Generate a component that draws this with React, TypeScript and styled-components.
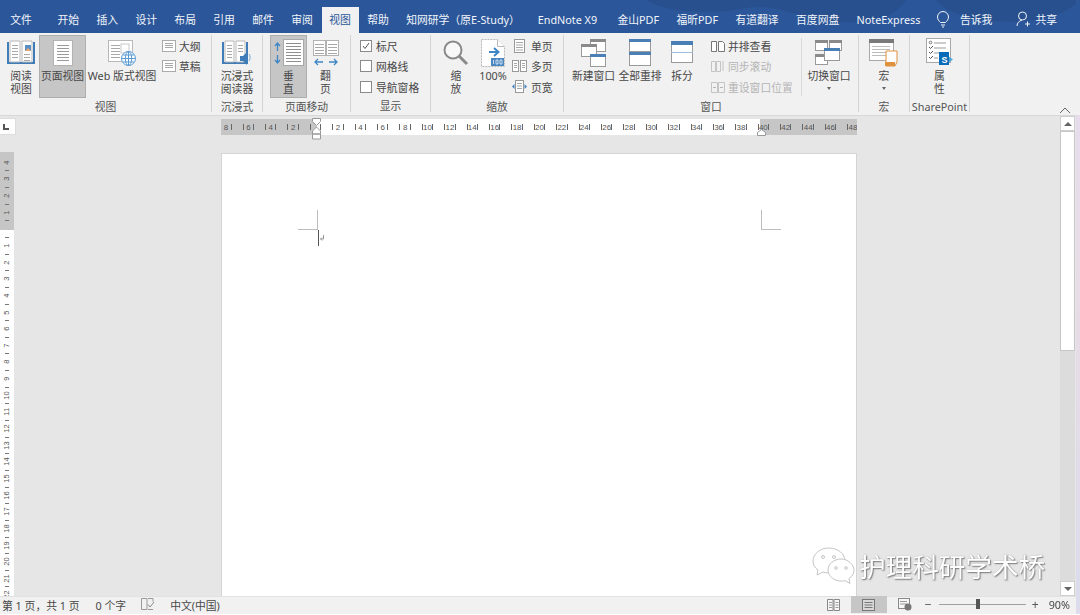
import React from "react";
import styled, { createGlobalStyle } from "styled-components";

const GlobalStyle = createGlobalStyle`
    html, body {
        margin: 0;
        padding: 0;
        background: #fff;
    }
    * {
        box-sizing: border-box;
    }
`;

const FONT = `"Noto Sans", "Noto Sans CJK SC", sans-serif`;

const Window = styled.div`
    position: relative;
    display: flex;
    width: 1080px;
    height: 615px;
    overflow: hidden;
    font-family: ${FONT};
    font-size: 10.8px;
    color: #484848;
    filter: blur(0.35px);
`;

const Main = styled.div`
    display: flex;
    flex-direction: column;
    width: 1076px;
    height: 614px;
`;

const DesktopStrip = styled.div`
    width: 4px;
    height: 614px;
    background: linear-gradient(#2b579a 33px, #f1f1f1 33px, #f1f1f1 115px, #e6dcec 115px, #e8dce6 300px, #dcdcec 600px);
`;

const TabBar = styled.div`
    position: relative;
    display: flex;
    flex: none;
    height: 33px;
    padding: 7px 0 0 1.5px;
    background: #2b579a;
`;

const TabPattern = styled.svg`
    position: absolute;
    top: 0;
    right: 0;
`;

const Tab = styled.div<{ $active?: boolean; $gap?: number }>`
    position: relative;
    display: flex;
    align-items: center;
    height: 26px;
    padding: 0 ${(p) => (p.$active ? "7.7px" : "8.7px")} 2px;
    margin-right: ${(p) => p.$gap ?? 0}px;
    white-space: nowrap;
    color: ${(p) => (p.$active ? "#2b579a" : "#f2f5fa")};
    background: ${(p) => (p.$active ? "#f1f1f1" : "transparent")};
`;

const TabTools = styled.div`
    position: relative;
    display: flex;
    flex: none;
    align-items: center;
    height: 26px;
    margin-left: auto;
    padding: 0 19px 2px 0;
    white-space: nowrap;
    color: #f2f5fa;
`;

const ToolText = styled.span<{ $gap: number }>`
    margin-left: ${(p) => p.$gap}px;
`;

const PersonSlot = styled.span`
    display: flex;
    flex: none;
    justify-content: flex-end;
    width: 38px;
`;

const Ribbon = styled.div`
    display: flex;
    flex: none;
    height: 82px;
    padding-top: 2px;
    background: #f1f1f1;
`;

const Group = styled.div<{ $width: number }>`
    display: flex;
    flex: none;
    flex-direction: column;
    width: ${(p) => p.$width}px;
    height: 77px;
    border-right: 1px solid #d2d2d2;
`;

const GroupBody = styled.div<{ $pad?: number }>`
    display: flex;
    height: 63px;
    padding-left: ${(p) => p.$pad ?? 0}px;
`;

const GroupLabel = styled.div`
    margin-top: 2px;
    height: 14px;
    line-height: 14px;
    text-align: center;
    white-space: nowrap;
    color: #555;
`;

const LargeButton = styled.div<{ $width: number; $active?: boolean; $left?: number }>`
    display: flex;
    flex: none;
    flex-direction: column;
    align-items: center;
    width: ${(p) => p.$width}px;
    height: 63px;
    margin-left: ${(p) => p.$left ?? 0}px;
    padding-top: 2px;
    line-height: 13px;
    text-align: center;
    white-space: nowrap;
    background: ${(p) => (p.$active ? "#c6c6c6" : "transparent")};
    outline: ${(p) => (p.$active ? "1px solid #aeaeae" : "none")};
    outline-offset: -1px;
`;

const IconSlot = styled.div`
    display: flex;
    flex: none;
    align-items: center;
    justify-content: center;
    height: 32px;
`;

const SmallColumn = styled.div<{ $width: number; $left?: number }>`
    display: flex;
    flex: none;
    flex-direction: column;
    width: ${(p) => p.$width}px;
    margin-left: ${(p) => p.$left ?? 0}px;
    padding-top: 0.5px;
`;

const SmallRow = styled.div<{ $gap?: number; $disabled?: boolean }>`
    display: flex;
    align-items: center;
    gap: ${(p) => p.$gap ?? 4}px;
    height: 20.5px;
    white-space: nowrap;
    color: ${(p) => (p.$disabled ? "#b4b4b4" : "#484848")};
`;

const IconBox = styled.span<{ $width: number }>`
    display: flex;
    flex: none;
    justify-content: center;
    width: ${(p) => p.$width}px;
`;

const CheckBox = styled.span`
    display: flex;
    flex: none;
    align-items: center;
    justify-content: center;
    width: 12px;
    height: 12px;
    background: #fff;
    border: 1px solid #8a8a8a;
`;

const InnerDivider = styled.div`
    flex: none;
    width: 1px;
    height: 58px;
    margin: 3px 3px 0 0;
    background: #d8d8d8;
`;

const Caret = styled.span`
    width: 0;
    height: 0;
    margin-top: 5px;
    border: 2.5px solid transparent;
    border-top: 3px solid #666;
    border-bottom: 0;
`;

const Collapse = styled.svg`
    align-self: flex-end;
    margin: 0 5px 1px auto;
`;

const Workspace = styled.div`
    display: flex;
    flex: none;
    height: 481px;
    background: #e6e6e6;
    border-top: 1px solid #d8d8d8;
`;

const LeftRail = styled.div`
    display: flex;
    flex: none;
    flex-direction: column;
    width: 221px;
    padding-top: 2px;
`;

const CornerButton = styled.div`
    display: flex;
    align-items: flex-end;
    width: 16px;
    height: 17px;
    margin-bottom: 17px;
    padding: 0 0 4px 3px;
    background: #fff;
    border: 1px solid #ddd;
    border-left: 0;
`;

const VerticalRuler = styled.div`
    flex: 1;
    width: 14px;
    padding-top: 2.8px;
    overflow: hidden;
    background: linear-gradient(#c6c6c6 78px, #fff 78px);
`;

const VerticalCell = styled.div`
    display: flex;
    flex-direction: column;
    align-items: center;
    height: 16.65px;
`;

const VerticalNumber = styled.span`
    flex: none;
    height: 15.65px;
    line-height: 14px;
    font-family: "Liberation Sans", sans-serif;
    font-size: 7.5px;
    color: #555;
    text-align: center;
    writing-mode: vertical-rl;
    transform: rotate(180deg);
`;

const VerticalDash = styled.span`
    width: 4px;
    height: 1px;
    background: #777;
`;

const Center = styled.div`
    position: relative;
    display: flex;
    flex: none;
    flex-direction: column;
    width: 636px;
    padding-top: 3px;
`;

const HorizontalRuler = styled.div`
    display: flex;
    flex: none;
    height: 16px;
    margin-bottom: 18px;
    overflow: hidden;
    background: linear-gradient(to right, #c6c6c6 96px, #fff 96px, #fff 539px, #c6c6c6 539px);
`;

const RulerCell = styled.div<{ $first?: boolean }>`
    display: flex;
    flex: none;
    align-items: center;
    justify-content: space-between;
    width: 22.4px;
    margin-left: ${(p) => (p.$first ? "-6.2px" : "0")};
    padding: 0 5.5px;
    font-family: "Liberation Sans", sans-serif;
    font-size: 8px;
    color: #555;
`;

const RulerTick = styled.span`
    width: 1px;
    height: 6px;
    background: #666;
`;

const IndentMarker = styled.svg<{ $left: number; $top: number }>`
    position: absolute;
    left: ${(p) => p.$left}px;
    top: ${(p) => p.$top}px;
`;

const Page = styled.div`
    position: relative;
    flex: 1;
    background: #fff;
    border: 1px solid #d4d4d4;
    border-bottom: 0;
`;

const CropMark = styled.span<{ $side: "left" | "right" }>`
    position: absolute;
    top: 56px;
    ${(p) => (p.$side === "left" ? "left: 76px;" : "left: 539px;")}
    width: 20px;
    height: 20px;
    border-bottom: 1px solid #bdbdbd;
    ${(p) => (p.$side === "left" ? "border-right" : "border-left")}: 1px solid #bdbdbd;
`;

const TextCursor = styled.svg`
    position: absolute;
    top: 76px;
    left: 95px;
`;

const RightRail = styled.div`
    display: flex;
    flex: 1;
    justify-content: flex-end;
    padding-right: 1px;
`;

const ScrollBar = styled.div`
    display: flex;
    flex-direction: column;
    width: 15px;
    background: #dcdcdc;
`;

const ScrollButton = styled.div<{ $down?: boolean }>`
    display: flex;
    flex: none;
    align-items: center;
    justify-content: center;
    height: 15px;
    margin-top: ${(p) => (p.$down ? "auto" : "0")};
    background: #fff;
    border: 1px solid #cfcfcf;
`;

const ScrollArrow = styled.span<{ $down?: boolean }>`
    width: 0;
    height: 0;
    border: 4px solid transparent;
    border-${(p) => (p.$down ? "top" : "bottom")}: 4px solid #666;
    border-${(p) => (p.$down ? "bottom" : "top")}: 0;
`;

const ScrollThumb = styled.div`
    flex: none;
    height: 220px;
    background: #fff;
    border: 1px solid #c6c6c6;
`;

const StatusBar = styled.div`
    display: flex;
    flex: none;
    align-items: center;
    height: 18px;
    padding: 0 6px 2px 2px;
    background: #f1f1f1;
    border-top: 1px solid #e2e2e2;
    white-space: nowrap;
`;

const StatusRight = styled.div`
    display: flex;
    flex: none;
    align-items: center;
    margin-left: auto;
`;

const StatusText = styled.span<{ $left?: number }>`
    margin-left: ${(p) => p.$left ?? 0}px;
`;

const StatusIcon = styled.span<{ $width: number; $active?: boolean; $left?: number }>`
    display: flex;
    flex: none;
    align-items: center;
    justify-content: center;
    width: ${(p) => p.$width}px;
    height: 17px;
    margin-left: ${(p) => p.$left ?? 0}px;
    background: ${(p) => (p.$active ? "#c6c6c6" : "transparent")};
`;

const ZoomSlider = styled.div`
    position: relative;
    flex: none;
    width: 87px;
    height: 1px;
    margin: 0 5px 0 6px;
    background: #a0a0a0;
`;

const ZoomThumb = styled.span`
    position: absolute;
    top: -5px;
    left: 37px;
    width: 4px;
    height: 10px;
    background: #555;
`;

const ZoomSign = styled.span<{ $left?: number }>`
    flex: none;
    width: 9px;
    margin-left: ${(p) => p.$left ?? 0}px;
    text-align: center;
    font-size: 12px;
    line-height: 12px;
    color: #555;
`;

const Watermark = styled.div`
    position: absolute;
    left: 812px;
    top: 546px;
    display: flex;
    align-items: center;
    gap: 3px;
    font-family: "Noto Sans CJK SC", sans-serif;
    font-size: 26.6px;
    line-height: 40px;
    color: #fff;
    text-shadow: 1px 1px 1.5px #777, 0 0 1px #999;
    white-space: nowrap;
`;

const Lines: React.FC<{ x: number; y: number; w: number; n: number; step?: number; color?: string }> = ({
    x,
    y,
    w,
    n,
    step = 3,
    color = "#a8a8a8",
}) => (
    <>
        {Array.from({ length: n }, (_, i) => (
            <path key={i} d={`M${x} ${y + i * step + 0.5}h${w}`} stroke={color} />
        ))}
    </>
);

const ReadIcon = () => (
    <svg width="28" height="28" viewBox="0 0 28 28">
        <path d="M1 3v21h26V3" fill="#fff" stroke="#3f7cb8" strokeWidth="2" />
        <path d="M3 2h10v21H3zM15 2h10v21H15z" fill="#fff" stroke="#b8b8b8" />
        <Lines x={5} y={6} w={6} n={5} />
        <Lines x={17} y={15} w={6} n={3} />
        <rect x="18" y="6" width="6" height="6" fill="#5b8fc4" />
        <path d="M18 12l3-3 3 3z" fill="#e9a76b" />
    </svg>
);

const PageIcon = () => (
    <svg width="24" height="28" viewBox="0 0 24 28">
        <rect x="2.5" y="1.5" width="19" height="25" fill="#fff" stroke="#b2b2b2" />
        <Lines x={6} y={6} w={12} n={6} step={3} color="#9a9a9a" />
    </svg>
);

const WebIcon = () => (
    <svg width="30" height="28" viewBox="0 0 30 28">
        <rect x="1.5" y="1.5" width="24" height="21" fill="#fff" stroke="#b8b8b8" />
        <Lines x={4} y={6} w={9} n={5} />
        <rect x="14" y="5" width="8" height="9" fill="none" stroke="#c8c8c8" />
        <circle cx="21.5" cy="19.5" r="7" fill="#fff" stroke="#5b9bd5" />
        <path d="M14.5 19.5h14M21.5 12.5v14M16 16h11M16 23h11" stroke="#5b9bd5" fill="none" />
        <ellipse cx="21.5" cy="19.5" rx="3.2" ry="7" fill="none" stroke="#5b9bd5" />
    </svg>
);

const MiniPage = () => (
    <svg width="14" height="12" viewBox="0 0 14 12">
        <rect x="0.5" y="0.5" width="13" height="11" fill="#fff" stroke="#aaa" />
        <Lines x={3} y={3} w={8} n={3} step={2} />
    </svg>
);

const BookSpeakerIcon = () => (
    <svg width="30" height="28" viewBox="0 0 30 28">
        <path d="M1 3v21h24V3" fill="#fff" stroke="#3f7cb8" strokeWidth="2" />
        <path d="M3 2h9v21H3zM14 2h9v21h-9z" fill="#fff" stroke="#b8b8b8" />
        <Lines x={5} y={6} w={5} n={5} />
        <Lines x={16} y={6} w={5} n={3} />
        <path d="M18 17h3l4-4v13l-4-4h-3z" fill="#3f7cb8" />
        <path d="M27 15c1.5 2 1.5 5 0 7" fill="none" stroke="#7aa7d2" />
    </svg>
);

const VerticalIcon = () => (
    <svg width="32" height="28" viewBox="0 0 32 28">
        <path d="M4.5 4v8M2 7l2.5-3L7 7M4.5 16v8M2 21l2.5 3L7 21" fill="none" stroke="#3f86c6" strokeWidth="1.3" />
        <rect x="10.5" y="0.5" width="20" height="26" fill="#fff" stroke="#a8a8a8" />
        <Lines x={13} y={4} w={15} n={7} step={3} color="#8e8e8e" />
    </svg>
);

const FlipIcon = () => (
    <svg width="28" height="28" viewBox="0 0 28 28">
        <rect x="1.5" y="1.5" width="12" height="15" fill="#fff" stroke="#b2b2b2" />
        <rect x="14.5" y="1.5" width="12" height="15" fill="#fff" stroke="#b2b2b2" />
        <Lines x={3} y={5} w={9} n={4} />
        <Lines x={16} y={5} w={9} n={4} />
        <path d="M3 23h8M6 20l-3 3 3 3M17 23h8M22 20l3 3-3 3" fill="none" stroke="#3f86c6" strokeWidth="1.3" />
    </svg>
);

const MagnifierIcon = () => (
    <svg width="28" height="28" viewBox="0 0 28 28">
        <circle cx="11" cy="11" r="8.5" fill="#fff" fillOpacity="0.5" stroke="#8a8a8a" strokeWidth="2" />
        <path d="M17 17l8 8" stroke="#8a8a8a" strokeWidth="3" />
    </svg>
);

const HundredIcon = () => (
    <svg width="26" height="30" viewBox="0 0 26 30">
        <path d="M1.5 1.5h16l7 7v20h-23z" fill="#fff" stroke="#b8b8b8" strokeDasharray="2 1" />
        <path d="M17.5 1.5v7h7" fill="#fff" stroke="#b8b8b8" />
        <path d="M9 14h9M14 10l4.5 4-4.5 4" fill="none" stroke="#3f86c6" strokeWidth="2" />
        <rect x="11" y="20" width="13" height="8" fill="#4a86c0" />
        <path d="M13.5 22v4M16 22h2v4h-2zM20 22h2v4h-2z" fill="none" stroke="#fff" strokeWidth="0.7" />
    </svg>
);

const OnePageIcon = () => (
    <svg width="11" height="14" viewBox="0 0 11 14">
        <rect x="0.5" y="0.5" width="10" height="13" fill="#fff" stroke="#999" />
        <Lines x={2} y={3} w={7} n={4} step={2.5} />
    </svg>
);

const TwoPagesIcon = () => (
    <svg width="15" height="12" viewBox="0 0 15 12">
        <rect x="0.5" y="0.5" width="6" height="11" fill="#fff" stroke="#999" />
        <rect x="8.5" y="0.5" width="6" height="11" fill="#fff" stroke="#999" />
        <Lines x={2} y={3} w={3} n={3} step={2} />
        <Lines x={10} y={3} w={3} n={3} step={2} />
    </svg>
);

const PageWidthIcon = () => (
    <svg width="15" height="13" viewBox="0 0 15 13">
        <rect x="3.5" y="0.5" width="8" height="12" fill="#fff" stroke="#999" />
        <Lines x={5} y={3} w={5} n={3} step={2.5} />
        <path d="M0 6.5l2.5-2.5v5zM15 6.5l-2.5-2.5v5z" fill="#3f86c6" />
    </svg>
);

const Win: React.FC<{ x: number; y: number; w: number; h: number; bar?: string }> = ({ x, y, w, h, bar = "#8a8a8a" }) => (
    <>
        <rect x={x + 0.5} y={y + 0.5} width={w} height={h} fill="#fff" stroke="#9a9a9a" />
        <rect x={x} y={y} width={w + 1} height={3} fill={bar} />
    </>
);

const NewWindowIcon = () => (
    <svg width="26" height="28" viewBox="0 0 26 28">
        <Win x={9} y={0} w={15} h={12} />
        <Win x={0} y={5} w={15} h={12} />
        <Win x={9} y={15} w={15} h={12} bar="#4a7fb5" />
    </svg>
);

const ArrangeIcon = () => (
    <svg width="24" height="28" viewBox="0 0 24 28">
        <rect x="1.5" y="0.5" width="21" height="12" fill="#fff" stroke="#9a9a9a" />
        <rect x="1" y="0" width="22" height="3" fill="#4a7fb5" />
        <rect x="1.5" y="14.5" width="21" height="12" fill="#fff" stroke="#9a9a9a" />
        <rect x="1" y="13" width="22" height="3" fill="#4a7fb5" />
    </svg>
);

const SplitIcon = () => (
    <svg width="24" height="24" viewBox="0 0 24 24">
        <rect x="1.5" y="0.5" width="21" height="21" fill="#fff" stroke="#9a9a9a" />
        <rect x="1" y="0" width="22" height="4" fill="#4a7fb5" />
        <path d="M1 11.5h22" stroke="#9fbcd8" />
    </svg>
);

const SideBySideIcon = () => (
    <svg width="14" height="12" viewBox="0 0 14 12">
        <path d="M0.5 1.5h5v10h-5zM7.5 1.5h4l2 2v8h-6z" fill="#fff" stroke="#777" />
    </svg>
);

const SyncIcon = () => (
    <svg width="14" height="12" viewBox="0 0 14 12">
        <path d="M0.5 1.5h4v10h-4zM5.5 1.5h4v10h-4z" fill="none" stroke="#c4c4c4" />
        <path d="M12 1v10" stroke="#c4c4c4" />
    </svg>
);

const ResetIcon = () => (
    <svg width="14" height="12" viewBox="0 0 14 12">
        <path d="M0.5 1.5h6v10h-6zM7.5 1.5h6v10h-6z" fill="none" stroke="#c4c4c4" />
        <path d="M2 6.5h3M9 6.5h3" stroke="#b4b4b4" />
    </svg>
);

const SwitchIcon = () => (
    <svg width="28" height="26" viewBox="0 0 28 26">
        <Win x={0} y={0} w={12} h={10} />
        <Win x={14} y={0} w={12} h={10} />
        <Win x={0} y={14} w={12} h={10} />
        <Win x={9} y={8} w={15} h={12} bar="#4a7fb5" />
    </svg>
);

const MacroIcon = () => (
    <svg width="30" height="28" viewBox="0 0 30 28">
        <rect x="0.5" y="0.5" width="24" height="21" fill="#fff" stroke="#a8a8a8" />
        <rect x="0" y="0" width="25" height="4" fill="#7a7a7a" />
        <Lines x={3} y={7} w={18} n={4} step={3} color="#bdbdbd" />
        <path d="M17 12h11v11l-2 4H17z" fill="#fff" stroke="#e0913f" />
        <rect x="16" y="23" width="10" height="4" fill="#e0913f" />
    </svg>
);

const PropertyIcon = () => (
    <svg width="28" height="30" viewBox="0 0 28 30">
        <rect x="0.5" y="0.5" width="24" height="24" fill="#fff" stroke="#a8a8a8" />
        <path d="M8 5h12M8 10h12M8 15h8M8 20h4" stroke="#9a9a9a" />
        <path d="M3 9l1.5 1.5L7 8M3 14l1.5 1.5L7 13M3 19l1.5 1.5L7 18" fill="none" stroke="#555" />
        <circle cx="4.5" cy="4.5" r="1.3" fill="none" stroke="#777" />
        <path d="M22 18l5 3.5-5 3.5z" fill="#4aa8d8" />
        <rect x="13" y="14" width="10" height="13" fill="#0a6cb8" />
        <text x="15.5" y="24.5" fontSize="9" fontWeight="700" fill="#fff" fontFamily="Liberation Sans">S</text>
    </svg>
);

const BulbIcon = () => (
    <svg width="14" height="18" viewBox="0 0 14 18">
        <path d="M4.5 12.5C3 11 1.5 9.5 1.5 7a5.5 5.5 0 0 1 11 0c0 2.5-1.5 4-3 5.5zM5 15h4M6 17h2" fill="none" stroke="#f2f5fa" />
    </svg>
);

const PersonIcon = () => (
    <svg width="14" height="16" viewBox="0 0 14 16">
        <circle cx="6.5" cy="5" r="4" fill="none" stroke="#f2f5fa" />
        <path d="M1 15c0-3 2-5 5-6M9 13h5M11.5 10.5v5" fill="none" stroke="#f2f5fa" />
    </svg>
);

const ReadModeIcon = () => (
    <svg width="13" height="12" viewBox="0 0 13 12">
        <path d="M0.5 0.5h5.5v11H0.5zM7 0.5h5.5v11H7z" fill="#f7f7f7" stroke="#888" />
        <Lines x={2} y={3} w={3} n={3} step={2.5} color="#999" />
        <Lines x={8.5} y={3} w={3} n={3} step={2.5} color="#999" />
    </svg>
);

const PrintModeIcon = () => (
    <svg width="13" height="12" viewBox="0 0 13 12">
        <rect x="0.5" y="0.5" width="12" height="11" fill="#d8d8d8" stroke="#777" />
        <Lines x={2.5} y={3} w={8} n={3} step={2.5} color="#777" />
    </svg>
);

const WebModeIcon = () => (
    <svg width="14" height="13" viewBox="0 0 14 13">
        <rect x="0.5" y="0.5" width="11" height="10" fill="#f7f7f7" stroke="#888" />
        <Lines x={2} y={3} w={7} n={2} step={2.5} color="#999" />
        <circle cx="10" cy="9" r="3.5" fill="#777" />
    </svg>
);

const ProofIcon = () => (
    <svg width="14" height="13" viewBox="0 0 14 13">
        <path d="M0.5 0.5h5.5v11H0.5zM7 0.5h5v3" fill="none" stroke="#999" />
        <path d="M7 6.5l2 2.5 4-5" fill="none" stroke="#888" />
        <path d="M7 11.5h5" stroke="#999" />
    </svg>
);

const WeChatIcon = () => (
    <svg width="44" height="38" viewBox="0 0 44 38">
        <g fill="#fff" stroke="#c4c4c4">
            <path d="M17 1C8 1 1 7 1 14c0 4 2 7 5 9l-1 5 6-3c2 .6 4 1 6 1 9 0 16-5 16-12S26 1 17 1z" />
            <path d="M29 12c-7 0-13 5-13 11s6 11 13 11c2 0 3 0 4-.5l5 3-1-5c3-2 5-5 5-8 0-6-6-11.5-13-11.5z" />
        </g>
        <circle cx="11" cy="10" r="1.5" fill="none" stroke="#c4c4c4" />
        <circle cx="22" cy="10" r="1.5" fill="none" stroke="#c4c4c4" />
        <circle cx="24" cy="21" r="1.3" fill="none" stroke="#c4c4c4" />
        <circle cx="34" cy="21" r="1.3" fill="none" stroke="#c4c4c4" />
    </svg>
);

const TAB_NAMES = ["开始", "插入", "设计", "布局", "引用", "邮件", "审阅"];
const EXTRA_TABS = ["金山PDF", "福昕PDF", "有道翻译", "百度网盘", "NoteExpress"];

const H_RULER: (number | null)[] = [8, 6, 4, 2, null];
for (let n = 2; n <= 48; n += 2) H_RULER.push(n);

const V_RULER: (number | null)[] = [4, 3, 2, 1, null];
for (let n = 1; n <= 22; n++) V_RULER.push(n);

const App: React.FC = () => {
    return (
        <Window>
            <GlobalStyle />
            <Main>
                <TabBar>
                    <TabPattern width="440" height="33" viewBox="0 0 440 33">
                        <path
                            d="M10 0c20 12 60 16 100 8 30-5 50 10 90 14 40 3 60-6 70-22zM300 0c10 16 60 28 110 18 12-3 22-8 30-14V0z"
                            fill="#28508f"
                        />
                    </TabPattern>
                    <Tab $gap={8.3}>文件</Tab>
                    {TAB_NAMES.map((name) => (
                        <Tab key={name}>{name}</Tab>
                    ))}
                    <Tab $active>视图</Tab>
                    <Tab>帮助</Tab>
                    <Tab $gap={0.5}>知网研学（原E-Study）</Tab>
                    <Tab $gap={3}>EndNote X9</Tab>
                    {EXTRA_TABS.map((name) => (
                        <Tab key={name}>{name}</Tab>
                    ))}
                    <TabTools>
                        <BulbIcon />
                        <ToolText $gap={10}>告诉我</ToolText>
                        <PersonSlot>
                            <PersonIcon />
                        </PersonSlot>
                        <ToolText $gap={5}>共享</ToolText>
                    </TabTools>
                </TabBar>

                <Ribbon>
                    <Group $width={212}>
                        <GroupBody $pad={3}>
                            <LargeButton $width={36}>
                                <IconSlot><ReadIcon /></IconSlot>
                                阅读
                                <br />
                                视图
                            </LargeButton>
                            <LargeButton $width={47} $active>
                                <IconSlot><PageIcon /></IconSlot>
                                页面视图
                            </LargeButton>
                            <LargeButton $width={72}>
                                <IconSlot><WebIcon /></IconSlot>
                                Web 版式视图
                            </LargeButton>
                            <SmallColumn $width={50} $left={4}>
                                <SmallRow $gap={3}><MiniPage />大纲</SmallRow>
                                <SmallRow $gap={3}><MiniPage />草稿</SmallRow>
                            </SmallColumn>
                        </GroupBody>
                        <GroupLabel>视图</GroupLabel>
                    </Group>

                    <Group $width={51}>
                        <GroupBody>
                            <LargeButton $width={50}>
                                <IconSlot><BookSpeakerIcon /></IconSlot>
                                沉浸式
                                <br />
                                阅读器
                            </LargeButton>
                        </GroupBody>
                        <GroupLabel>沉浸式</GroupLabel>
                    </Group>

                    <Group $width={88}>
                        <GroupBody $pad={7}>
                            <LargeButton $width={37} $active>
                                <IconSlot><VerticalIcon /></IconSlot>
                                垂
                                <br />
                                直
                            </LargeButton>
                            <LargeButton $width={37}>
                                <IconSlot><FlipIcon /></IconSlot>
                                翻
                                <br />
                                页
                            </LargeButton>
                        </GroupBody>
                        <GroupLabel>页面移动</GroupLabel>
                    </Group>

                    <Group $width={80}>
                        <GroupBody $pad={9}>
                            <SmallColumn $width={70}>
                                <SmallRow>
                                    <CheckBox>
                                        <svg width="10" height="10" viewBox="0 0 10 10">
                                            <path d="M2 5l2 2.5L8 2" fill="none" stroke="#555" />
                                        </svg>
                                    </CheckBox>
                                    标尺
                                </SmallRow>
                                <SmallRow><CheckBox />网格线</SmallRow>
                                <SmallRow><CheckBox />导航窗格</SmallRow>
                            </SmallColumn>
                        </GroupBody>
                        <GroupLabel>显示</GroupLabel>
                    </Group>

                    <Group $width={133}>
                        <GroupBody $pad={9}>
                            <LargeButton $width={32}>
                                <IconSlot><MagnifierIcon /></IconSlot>
                                缩
                                <br />
                                放
                            </LargeButton>
                            <LargeButton $width={38} $left={2}>
                                <IconSlot><HundredIcon /></IconSlot>
                                100%
                            </LargeButton>
                            <SmallColumn $width={50}>
                                <SmallRow><IconBox $width={15}><OnePageIcon /></IconBox>单页</SmallRow>
                                <SmallRow><IconBox $width={15}><TwoPagesIcon /></IconBox>多页</SmallRow>
                                <SmallRow><IconBox $width={15}><PageWidthIcon /></IconBox>页宽</SmallRow>
                            </SmallColumn>
                        </GroupBody>
                        <GroupLabel>缩放</GroupLabel>
                    </Group>

                    <Group $width={295}>
                        <GroupBody $pad={6}>
                            <LargeButton $width={47}>
                                <IconSlot><NewWindowIcon /></IconSlot>
                                新建窗口
                            </LargeButton>
                            <LargeButton $width={46}>
                                <IconSlot><ArrangeIcon /></IconSlot>
                                全部重排
                            </LargeButton>
                            <LargeButton $width={38}>
                                <IconSlot><SplitIcon /></IconSlot>
                                拆分
                            </LargeButton>
                            <SmallColumn $width={90} $left={10}>
                                <SmallRow $gap={3}><SideBySideIcon />并排查看</SmallRow>
                                <SmallRow $gap={3} $disabled><SyncIcon />同步滚动</SmallRow>
                                <SmallRow $gap={3} $disabled><ResetIcon />重设窗口位置</SmallRow>
                            </SmallColumn>
                            <InnerDivider />
                            <LargeButton $width={48}>
                                <IconSlot><SwitchIcon /></IconSlot>
                                切换窗口
                                <Caret />
                            </LargeButton>
                        </GroupBody>
                        <GroupLabel>窗口</GroupLabel>
                    </Group>

                    <Group $width={51}>
                        <GroupBody>
                            <LargeButton $width={50}>
                                <IconSlot><MacroIcon /></IconSlot>
                                宏
                                <Caret />
                            </LargeButton>
                        </GroupBody>
                        <GroupLabel>宏</GroupLabel>
                    </Group>

                    <Group $width={60}>
                        <GroupBody>
                            <LargeButton $width={59}>
                                <IconSlot><PropertyIcon /></IconSlot>
                                属
                                <br />
                                性
                            </LargeButton>
                        </GroupBody>
                        <GroupLabel>SharePoint</GroupLabel>
                    </Group>

                    <Collapse width="12" height="8" viewBox="0 0 12 8">
                        <path d="M1 7l5-5 5 5" fill="none" stroke="#666" />
                    </Collapse>
                </Ribbon>

                <Workspace>
                    <LeftRail>
                        <CornerButton>
                            <svg width="6" height="6" viewBox="0 0 6 6">
                                <path d="M1 0v5h5" fill="none" stroke="#555" strokeWidth="2" />
                            </svg>
                        </CornerButton>
                        <VerticalRuler>
                            {V_RULER.map((n, i) => (
                                <VerticalCell key={i}>
                                    <VerticalNumber>{n}</VerticalNumber>
                                    <VerticalDash />
                                </VerticalCell>
                            ))}
                        </VerticalRuler>
                    </LeftRail>

                    <Center>
                        <HorizontalRuler>
                            {H_RULER.map((n, i) => (
                                <RulerCell key={i} $first={i === 0}>
                                    <RulerTick />
                                    {n}
                                    <RulerTick />
                                </RulerCell>
                            ))}
                        </HorizontalRuler>
                        <IndentMarker $left={91} $top={2} width="9" height="22" viewBox="0 0 9 22">
                            <path d="M0.5 0.5h8v3l-4 4-4-4z" fill="#fff" stroke="#999" />
                            <path d="M4.5 9l4 4v3h-8v-3zM0.5 16h8v5h-8z" fill="#fff" stroke="#999" />
                        </IndentMarker>
                        <IndentMarker $left={536} $top={13} width="9" height="7" viewBox="0 0 9 7">
                            <path d="M4.5 0.5l4 3v3h-8v-3z" fill="#fff" stroke="#999" />
                        </IndentMarker>
                        <Page>
                            <CropMark $side="left" />
                            <CropMark $side="right" />
                            <TextCursor width="8" height="16" viewBox="0 0 8 16">
                                <path d="M1.5 0v16" stroke="#555" />
                                <path d="M6.5 5v4h-3M5 7.5L3.5 9 5 10.5" fill="none" stroke="#999" />
                            </TextCursor>
                        </Page>
                    </Center>

                    <RightRail>
                        <ScrollBar>
                            <ScrollButton><ScrollArrow /></ScrollButton>
                            <ScrollThumb />
                            <ScrollButton $down><ScrollArrow $down /></ScrollButton>
                        </ScrollBar>
                    </RightRail>
                </Workspace>

                <StatusBar>
                    <StatusText>第 1 页，共 1 页</StatusText>
                    <StatusText $left={16}>0 个字</StatusText>
                    <StatusIcon $width={14} $left={15}><ProofIcon /></StatusIcon>
                    <StatusText $left={15}>中文(中国)</StatusText>
                    <StatusRight>
                        <StatusIcon $width={13}><ReadModeIcon /></StatusIcon>
                        <StatusIcon $width={36} $left={11} $active><PrintModeIcon /></StatusIcon>
                        <StatusIcon $width={14} $left={11}><WebModeIcon /></StatusIcon>
                        <ZoomSign $left={12}>−</ZoomSign>
                        <ZoomSlider><ZoomThumb /></ZoomSlider>
                        <ZoomSign>+</ZoomSign>
                        <StatusText $left={9}>90%</StatusText>
                    </StatusRight>
                </StatusBar>
            </Main>
            <DesktopStrip />
            <Watermark>
                <WeChatIcon />
                护理科研学术桥
            </Watermark>
        </Window>
    );
};

export default App;
